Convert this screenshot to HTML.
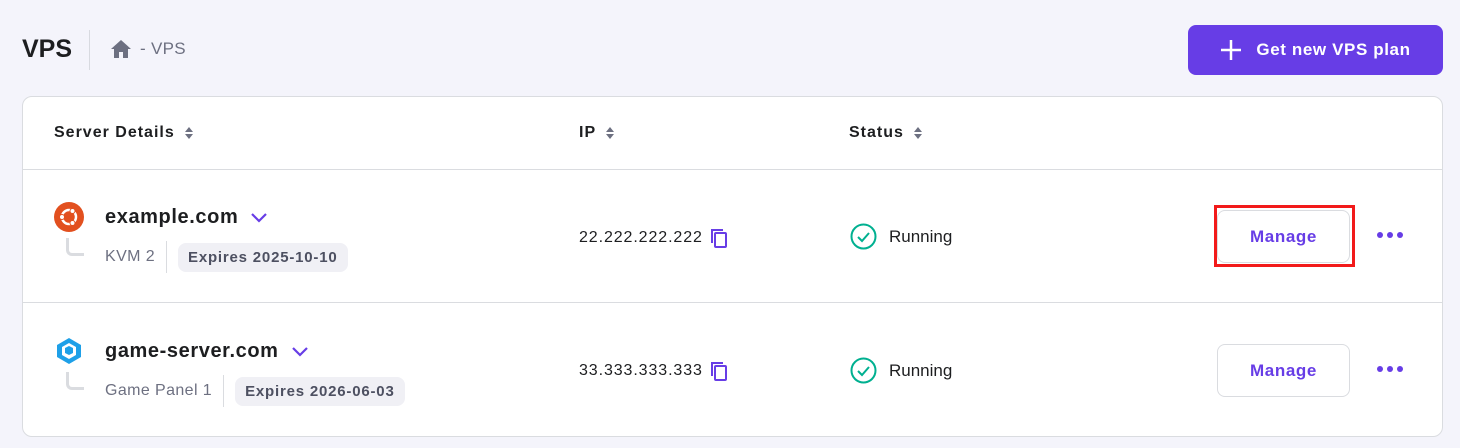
<!DOCTYPE html>
<html><head><meta charset="utf-8"><style>
*{box-sizing:border-box;margin:0;padding:0}
body{width:1460px;height:448px;background:#f4f4fb;font-family:"Liberation Sans",sans-serif;color:#1d1e20;position:relative;overflow:hidden}
.abs{position:absolute}
.title{left:22px;top:35px;font-size:25px;font-weight:bold}
.vsep{left:89px;top:30px;width:1px;height:40px;background:#d8dae0}
.crumb{left:110px;top:39px;font-size:17px;color:#6d7081;display:flex;align-items:center;gap:8px;letter-spacing:.3px}
.btn{left:1188px;top:25px;width:255px;height:50px;background:#673de6;border-radius:8px;color:#fff;font-weight:bold;font-size:17px;display:flex;align-items:center;justify-content:center;gap:14px;letter-spacing:.6px}
.card{left:22px;top:96px;width:1421px;height:341px;background:#fff;border:1px solid #dadce0;border-radius:10px}
.hline{left:23px;width:1419px;height:1px;background:#dadce0}
.th{font-size:16px;font-weight:bold;display:flex;align-items:center;gap:10px;top:124px;letter-spacing:1px}
.name{font-size:20px;font-weight:bold;display:flex;align-items:center;gap:12px;letter-spacing:.6px}
.sub{font-size:16px;color:#6d7081;display:flex;align-items:center;letter-spacing:.4px}
.badge{background:#f0f0f5;border-radius:8px;padding:6px 10px;font-weight:bold;font-size:15px;color:#4d5061;margin-left:11px;letter-spacing:.8px}
.bar{width:1px;height:32px;background:#dadce0;margin-left:11px}
.ip{font-size:16px;display:flex;align-items:center;gap:7px;letter-spacing:.9px}
.st{font-size:17px;display:flex;align-items:center;gap:12px}
.mg{width:133px;height:53px;border:1px solid #dadce0;border-radius:8px;color:#673de6;font-weight:bold;font-size:17px;display:flex;align-items:center;justify-content:center;background:#fff;letter-spacing:.6px}
.dots{display:flex;gap:4px}.dots i{width:6px;height:6px;border-radius:50%;background:#673de6;display:block}
.tree{width:18px;height:18px;border-left:3px solid #dadce0;border-bottom:3px solid #dadce0;border-bottom-left-radius:6px}
</style></head><body>
<div class="abs title">VPS</div>
<div class="abs vsep"></div>
<div class="abs crumb"><svg width="22" height="20" viewBox="0 0 22 20"><path d="M11 1 1 10h3v9h5v-6h4v6h5v-9h3z" fill="#6d7081"/></svg><span>- VPS</span></div>
<div class="abs btn"><svg width="22" height="22"><path d="M11 1v20M1 11h20" stroke="#fff" stroke-width="2.5"/></svg>Get new VPS plan</div>
<div class="abs card"></div>
<div class="abs hline" style="top:169px"></div>
<div class="abs hline" style="top:302px"></div>
<svg width="0" height="0" style="position:absolute"><defs><g id="srt"><path d="M0 5 4 0 8 5z M0 7 4 12 8 7z" fill="#6d7081"/></g></defs></svg>
<div class="abs th" style="left:54px">Server Details <svg width="8" height="12"><use href="#srt"/></svg></div>
<div class="abs th" style="left:579px">IP <svg width="8" height="12"><use href="#srt"/></svg></div>
<div class="abs th" style="left:849px">Status <svg width="8" height="12"><use href="#srt"/></svg></div>

<!-- row1 -->
<svg class="abs" style="left:54px;top:202px" width="30" height="30" viewBox="0 0 30 30"><circle cx="15" cy="15" r="15" fill="#e2501f"/><circle cx="15" cy="15" r="7" fill="none" stroke="#fff" stroke-width="2.5"/><circle cx="8" cy="15" r="2.5" fill="#fff" stroke="#e2501f"/><circle cx="18.5" cy="9" r="2.5" fill="#fff" stroke="#e2501f"/><circle cx="18.5" cy="21" r="2.5" fill="#fff" stroke="#e2501f"/></svg>
<div class="abs tree" style="left:66px;top:238px"></div>
<div class="abs name" style="left:105px;top:206px">example.com <svg width="18" height="11"><path d="M2 2l7 7 7-7" stroke="#673de6" stroke-width="2.2" fill="none"/></svg></div>
<div class="abs sub" style="left:105px;top:241px">KVM 2<div class="bar"></div><span class="badge">Expires 2025-10-10</span></div>
<div class="abs ip" style="left:579px;top:228px">22.222.222.222 <svg width="18" height="20"><path d="M2 15V2h11" stroke="#673de6" stroke-width="2" fill="none"/><rect x="5" y="5" width="11" height="14" rx="1" stroke="#673de6" stroke-width="2" fill="none"/></svg></div>
<div class="abs st" style="left:850px;top:223px"><svg width="27" height="27"><circle cx="13.5" cy="13.5" r="12" stroke="#00b090" stroke-width="2" fill="none"/><path d="M8 14l4 4 7-8" stroke="#00b090" stroke-width="2" fill="none"/></svg>Running</div>
<div class="abs mg" style="left:1217px;top:210px">Manage</div>
<div class="abs" style="left:1214px;top:205px;width:141px;height:62px;border:3px solid #f21a1a"></div>
<div class="abs dots" style="left:1377px;top:232px"><i></i><i></i><i></i></div>

<!-- row2 -->
<svg class="abs" style="left:55px;top:337px" width="28" height="28" viewBox="0 0 28 28"><path d="M14 1 26 8v12l-12 7L2 20V8z" fill="#1ea0e8"/><path d="M14 6l7 4v8l-7 4-7-4v-8z" fill="#fff"/><path d="M14 9l4 2v5l-4 2-4-2v-5z" fill="#1ea0e8"/></svg>
<div class="abs tree" style="left:66px;top:372px"></div>
<div class="abs name" style="left:105px;top:340px">game-server.com <svg width="18" height="11"><path d="M2 2l7 7 7-7" stroke="#673de6" stroke-width="2.2" fill="none"/></svg></div>
<div class="abs sub" style="left:105px;top:375px">Game Panel 1<div class="bar"></div><span class="badge">Expires 2026-06-03</span></div>
<div class="abs ip" style="left:579px;top:361px">33.333.333.333 <svg width="18" height="20"><path d="M2 15V2h11" stroke="#673de6" stroke-width="2" fill="none"/><rect x="5" y="5" width="11" height="14" rx="1" stroke="#673de6" stroke-width="2" fill="none"/></svg></div>
<div class="abs st" style="left:850px;top:357px"><svg width="27" height="27"><circle cx="13.5" cy="13.5" r="12" stroke="#00b090" stroke-width="2" fill="none"/><path d="M8 14l4 4 7-8" stroke="#00b090" stroke-width="2" fill="none"/></svg>Running</div>
<div class="abs mg" style="left:1217px;top:344px">Manage</div>
<div class="abs dots" style="left:1377px;top:366px"><i></i><i></i><i></i></div>
</body></html>
